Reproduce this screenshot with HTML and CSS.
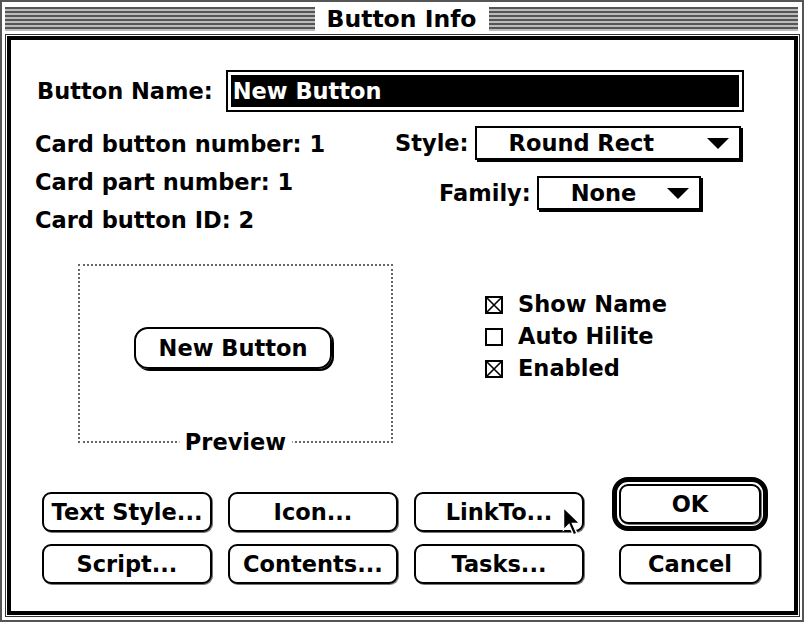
FILE: index.html
```html
<!DOCTYPE html>
<html lang="en">
<head>
    <meta charset="UTF-8">
    <meta name="viewport" content="width=device-width, initial-scale=1.0">
    <title>Button Info</title>
    <link rel="stylesheet" href="styles.css">
</head>
<body>
    <div class="window">
        <!-- Barra de título -->
        <div class="titlebar">
            <div class="stripes"></div>
            <div class="title">Button Info</div>
            <div class="stripes"></div>
        </div>

        <div class="frame">
            <div class="content">
                <div class="name-row">
                    <span class="name-label">Button Name:</span>
                    <div class="field">
                        <div class="field-text">New Button</div>
                    </div>
                </div>

                <div class="info">
                    <div class="facts">
                        <div>Card button number: 1</div>
                        <div>Card part number: 1</div>
                        <div>Card button ID: 2</div>
                    </div>
                    <div class="popups">
                        <div class="popup-row">
                            <span>Style:</span>
                            <div class="popup popup-style">
                                <span>Round Rect</span>
                                <svg class="arrow" width="22" height="11" viewBox="0 0 22 11"><polygon points="0,0 22,0 11,11" fill="#000"/></svg>
                            </div>
                        </div>
                        <div class="popup-row family-row">
                            <span>Family:</span>
                            <div class="popup popup-family">
                                <span>None</span>
                                <svg class="arrow" width="22" height="11" viewBox="0 0 22 11"><polygon points="0,0 22,0 11,11" fill="#000"/></svg>
                            </div>
                        </div>
                    </div>
                </div>

                <div class="middle">
                    <div class="preview">
                        <div class="preview-button">New Button</div>
                        <span class="preview-label">Preview</span>
                    </div>
                    <ul class="checks">
                        <li>
                            <svg class="box" width="18" height="18" viewBox="0 0 18 18"><rect x="1" y="1" width="16" height="16" fill="#fff" stroke="#000" stroke-width="2"/><path d="M2 2 L16 16 M16 2 L2 16" stroke="#000" stroke-width="1.6"/></svg>
                            Show Name
                        </li>
                        <li>
                            <svg class="box" width="18" height="18" viewBox="0 0 18 18"><rect x="1" y="1" width="16" height="16" fill="#fff" stroke="#000" stroke-width="2"/></svg>
                            Auto Hilite
                        </li>
                        <li>
                            <svg class="box" width="18" height="18" viewBox="0 0 18 18"><rect x="1" y="1" width="16" height="16" fill="#fff" stroke="#000" stroke-width="2"/><path d="M2 2 L16 16 M16 2 L2 16" stroke="#000" stroke-width="1.6"/></svg>
                            Enabled
                        </li>
                    </ul>
                </div>

                <div class="buttons">
                    <div class="button-grid">
                        <button class="btn">Text Style...</button>
                        <button class="btn">Icon...</button>
                        <button class="btn">LinkTo...</button>
                        <button class="btn">Script...</button>
                        <button class="btn">Contents...</button>
                        <button class="btn">Tasks...</button>
                    </div>
                    <div class="main-buttons">
                        <div class="default-ring">
                            <button class="btn btn-small">OK</button>
                        </div>
                        <button class="btn btn-small">Cancel</button>
                    </div>
                </div>
            </div>
        </div>

        <!-- Cursor del ratón -->
        <svg class="cursor" width="22" height="32" viewBox="0 0 22 32">
            <polygon points="1.5,1.5 1.5,24 7,18.5 11.5,29 15,27.5 10.5,17.5 18,17.5" fill="#000" stroke="#fff" stroke-width="1.5" stroke-linejoin="miter"/>
        </svg>
    </div>
</body>
</html>
```

FILE: styles.css
```css
* {
    margin: 0;
    padding: 0;
    box-sizing: border-box;
}

body {
    background: #fff;
    color: #000;
    font-family: "DejaVu Sans", "Liberation Sans", sans-serif;
    font-weight: bold;
    font-size: 22.5px;
}

/* Ventana */
.window {
    position: relative;
    width: 804px;
    height: 622px;
    border: 2px solid #555;
    padding: 0 2px 3px 3px;
    display: flex;
    flex-direction: column;
    background: #fff;
}

.titlebar {
    height: 32px;
    padding: 5px 2px 3px 0;
    display: flex;
}

.stripes {
    flex: 1;
    background: repeating-linear-gradient(to bottom, #555 0, #555 2px, #bbb 2px, #bbb 4px);
}

.title {
    padding: 0 12px;
    font-size: 23.5px;
    line-height: 24px;
    background: #fff;
}

.frame {
    flex: 1;
    display: flex;
    border: 1px solid #333;
    padding: 1px;
}

.content {
    flex: 1;
    border: 4px solid #000;
}

/* Nombre del botón */
.name-row {
    display: flex;
    align-items: center;
    margin-top: 30px;
    padding-left: 26px;
}

.name-label {
    margin-right: 13px;
}

.field {
    width: 518px;
    border: 2px solid #000;
    padding: 3px;
}

.field-text {
    height: 32px;
    line-height: 32px;
    padding-left: 2px;
    background: #000;
    color: #fff;
}

/* Datos y menús */
.info {
    display: grid;
    grid-template-columns: 384px auto;
    margin-top: 13px;
}

.facts {
    padding-left: 24px;
    line-height: 38px;
}

.popups {
    padding-top: 1px;
}

.popup-row {
    display: flex;
    align-items: center;
    gap: 6px;
}

.family-row {
    margin-top: 16px;
    margin-left: 44px;
}

.popup {
    display: flex;
    align-items: center;
    height: 34px;
    border: 2px solid #000;
    box-shadow: 2px 2px 0 #000;
    padding: 0 10px 0 32px;
    background: #fff;
}

.popup-style {
    width: 266px;
}

.popup-family {
    width: 164px;
}

.popup .arrow {
    margin-left: auto;
}

/* Vista previa */
.middle {
    display: flex;
    align-items: flex-start;
    margin-top: 25px;
}

.preview {
    position: relative;
    width: 315px;
    height: 179px;
    margin-left: 67px;
    border: 2px dotted #666;
    display: flex;
    justify-content: center;
    align-items: center;
    padding: 0 5px 11px 0;
}

.preview-button {
    width: 198px;
    height: 42px;
    line-height: 38px;
    text-align: center;
    border: 2px solid #000;
    border-radius: 14px;
    box-shadow: 2px 2px 0 #000;
}

.preview-label {
    position: absolute;
    left: 50%;
    bottom: -1px;
    transform: translate(-50%, 50%);
    padding: 0 6px;
    line-height: 24px;
    background: #fff;
}

.checks {
    list-style: none;
    margin-top: 24px;
    margin-left: 92px;
}

.checks li {
    display: flex;
    align-items: center;
    height: 32px;
    gap: 15px;
}

.checks .box {
    display: block;
    margin-top: 1px;
}

/* Botones */
.buttons {
    display: flex;
    align-items: flex-end;
    margin-top: 34px;
}

.button-grid {
    display: grid;
    grid-template-columns: repeat(3, 170px);
    grid-auto-rows: 40px;
    column-gap: 16px;
    row-gap: 12px;
    margin-left: 31px;
}

.btn {
    font: inherit;
    color: #000;
    background: #fff;
    border: 2px solid #000;
    border-radius: 9px;
    box-shadow: 1px 1px 0 #777;
    height: 40px;
    cursor: pointer;
}

.btn-small {
    width: 142px;
}

.main-buttons {
    display: flex;
    flex-direction: column;
    align-items: center;
    gap: 13px;
    margin-left: 28px;
}

.default-ring {
    border: 5px solid #000;
    border-radius: 16px;
    padding: 2px;
}

.default-ring .btn {
    display: block;
}

.cursor {
    position: absolute;
    left: 560px;
    top: 504px;
}
```
